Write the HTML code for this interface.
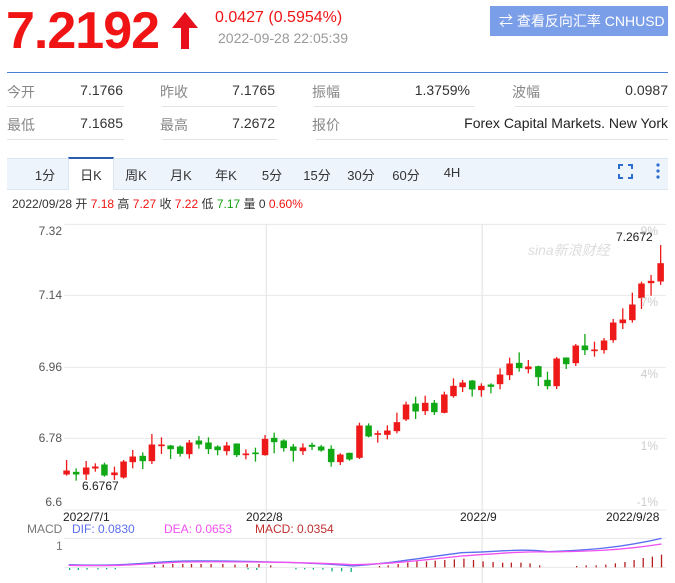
<!DOCTYPE html>
<html><head><meta charset="utf-8"><style>
body{margin:0;width:675px;height:583px;background:#fff;font-family:"Liberation Sans","Noto Sans CJK SC",sans-serif;position:relative;overflow:hidden}
.a{position:absolute;white-space:nowrap}
.g{color:#888}
.t{position:absolute;top:165px;font-size:13px;color:#333;transform:translateX(-50%)}
.yl{position:absolute;left:20px;width:42px;text-align:right;font-size:12px;color:#555}
.yr{position:absolute;left:610px;width:48px;text-align:right;font-size:12px;color:#ccc}
.ln{position:absolute;border-top:1px solid #e4e4e4}
</style></head><body>
<div class="a" style="left:6px;top:1px;font-size:52px;font-weight:bold;color:#f01414;letter-spacing:-1px;line-height:60px">7.2192</div>
<svg class="a" style="left:170px;top:12px" width="30" height="38"><path d="M15 0 L28 16 L19 16 L19 37 L11 37 L11 16 L2 16 Z" fill="#e8101c"/></svg>
<div class="a" style="left:215px;top:9px;font-size:16px;color:#f01414">0.0427 (0.5954%)</div>
<div class="a" style="left:218px;top:30px;font-size:14px;color:#999">2022-09-28 22:05:39</div>
<div class="a" style="left:490px;top:6px;width:178px;height:30px;background:#7b9ee8;color:#fff;font-size:14px;line-height:30px;overflow:hidden"><span style="padding-left:9px">⇄ 查看反向汇率 CNHUSD</span></div>
<div class="a" style="left:7px;top:72px;width:661px;border-top:1px solid #4a7fcf"></div>
<div style="font-size:14px">
<div class="a g" style="left:7px;top:82px">今开</div><div class="a" style="left:60px;top:82px;text-align:right;color:#333;width:63px">7.1766</div>
<div class="a g" style="left:160px;top:82px">昨收</div><div class="a" style="left:200px;top:82px;width:75px;text-align:right;color:#333">7.1765</div>
<div class="a g" style="left:312px;top:82px">振幅</div><div class="a" style="left:380px;top:82px;width:90px;text-align:right;color:#333">1.3759%</div>
<div class="a g" style="left:512px;top:82px">波幅</div><div class="a" style="left:580px;top:82px;width:88px;text-align:right;color:#333">0.0987</div>
<div class="a g" style="left:7px;top:115px">最低</div><div class="a" style="left:60px;top:115px;text-align:right;color:#333;width:63px">7.1685</div>
<div class="a g" style="left:160px;top:115px">最高</div><div class="a" style="left:200px;top:115px;width:75px;text-align:right;color:#333">7.2672</div>
<div class="a g" style="left:312px;top:115px">报价</div><div class="a" style="left:400px;top:115px;width:268px;text-align:right;color:#222">Forex Capital Markets. New York</div>
</div>
<div class="ln" style="left:7px;top:106px;width:117px"></div>
<div class="ln" style="left:162px;top:106px;width:115px"></div>
<div class="ln" style="left:314px;top:106px;width:161px"></div>
<div class="ln" style="left:515px;top:106px;width:153px"></div>
<div class="ln" style="left:7px;top:139px;width:117px"></div>
<div class="ln" style="left:162px;top:139px;width:115px"></div>
<div class="ln" style="left:316px;top:139px;width:352px"></div>
<div class="a" style="left:7px;top:158px;width:661px;height:30px;background:#eef4fc;border-top:1px solid #dce6f2;border-bottom:1px solid #dce6f2"></div>
<div class="a" style="left:68px;top:157px;width:44px;height:31px;background:#fff;border-top:2px solid #2a5db0;border-left:1px solid #dce6f2;border-right:1px solid #dce6f2"></div>
<div class="t" style="left:45px">1分</div><div class="t" style="left:91px">日K</div>
<div class="t" style="left:136px">周K</div><div class="t" style="left:181px">月K</div>
<div class="t" style="left:226px">年K</div><div class="t" style="left:272px">5分</div>
<div class="t" style="left:317px">15分</div><div class="t" style="left:361px">30分</div>
<div class="t" style="left:406px">60分</div><div class="t" style="left:452px">4H</div>
<svg class="a" style="left:618px;top:164px" width="15" height="15"><path d="M1 5V1H5M10 1H14V5M14 10V14H10M5 14H1V10" stroke="#2a6fd0" stroke-width="2" fill="none"/></svg>
<svg class="a" style="left:656px;top:162px" width="4" height="18"><circle cx="2" cy="3" r="1.6" fill="#2a6fd0"/><circle cx="2" cy="9" r="1.6" fill="#2a6fd0"/><circle cx="2" cy="15" r="1.6" fill="#2a6fd0"/></svg>
<div class="a" style="left:12px;top:195px;font-size:12px;color:#333">2022/09/28 开 <span style="color:#f01414">7.18</span> 高 <span style="color:#f01414">7.27</span> 收 <span style="color:#f01414">7.22</span> 低 <span style="color:#10a010">7.17</span> 量 0 <span style="color:#f01414">0.60%</span></div>
<svg class="a" style="left:0;top:220px" width="675" height="363" viewBox="0 0 1551 1089" preserveAspectRatio="none">
<g stroke="#e8e8e8" stroke-width="3">
<line x1="148" y1="13" x2="1530" y2="13"/><line x1="148" y1="226" x2="1530" y2="226"/><line x1="148" y1="442" x2="1530" y2="442"/><line x1="148" y1="655" x2="1530" y2="655"/><line x1="148" y1="870" x2="1530" y2="870"/>
<line x1="612" y1="13" x2="612" y2="1089"/><line x1="1108" y1="13" x2="1108" y2="1089"/>
<line x1="148" y1="955" x2="1530" y2="955"/><line x1="148" y1="1042" x2="1530" y2="1042"/>
</g>
<g stroke-width="3">
<g stroke="#ee1a1a" fill="#ee1a1a">
<line x1="153" y1="720" x2="153" y2="767"/><rect x="147" y="753" width="12" height="9"/>
<line x1="198" y1="723" x2="198" y2="780"/><rect x="192" y="744" width="12" height="18"/>
<line x1="219" y1="730" x2="219" y2="755"/><rect x="213" y="741" width="12" height="3"/>
<line x1="263" y1="740" x2="263" y2="780"/><rect x="257" y="759" width="12" height="5"/>
<line x1="284" y1="720" x2="284" y2="776"/><rect x="278" y="726" width="12" height="45"/>
<line x1="305" y1="690" x2="305" y2="745"/><rect x="299" y="711" width="12" height="14"/>
<line x1="349" y1="642" x2="349" y2="732"/><rect x="343" y="675" width="12" height="47"/>
<line x1="371" y1="652" x2="371" y2="702"/><rect x="365" y="675" width="12" height="2"/>
<line x1="435" y1="660" x2="435" y2="716"/><rect x="429" y="669" width="12" height="32"/>
<line x1="521" y1="666" x2="521" y2="706"/><rect x="515" y="678" width="12" height="14"/>
<line x1="565" y1="688" x2="565" y2="718"/><rect x="559" y="702" width="12" height="2"/>
<line x1="609" y1="645" x2="609" y2="707"/><rect x="603" y="658" width="12" height="46"/>
<line x1="696" y1="670" x2="696" y2="705"/><rect x="690" y="684" width="12" height="8"/>
<line x1="782" y1="700" x2="782" y2="735"/><rect x="776" y="705" width="12" height="20"/>
<line x1="826" y1="608" x2="826" y2="717"/><rect x="820" y="618" width="12" height="94"/>
<line x1="868" y1="632" x2="868" y2="668"/><rect x="862" y="641" width="12" height="2"/>
<line x1="890" y1="616" x2="890" y2="658"/><rect x="884" y="633" width="12" height="10"/>
<line x1="912" y1="578" x2="912" y2="640"/><rect x="906" y="608" width="12" height="24"/>
<line x1="933" y1="545" x2="933" y2="603"/><rect x="927" y="555" width="12" height="42"/>
<line x1="977" y1="527" x2="977" y2="585"/><rect x="971" y="550" width="12" height="22"/>
<line x1="1021" y1="515" x2="1021" y2="580"/><rect x="1015" y="525" width="12" height="52"/>
<line x1="1042" y1="475" x2="1042" y2="533"/><rect x="1036" y="499" width="12" height="28"/>
<line x1="1063" y1="480" x2="1063" y2="516"/><rect x="1057" y="489" width="12" height="11"/>
<line x1="1106" y1="490" x2="1106" y2="530"/><rect x="1100" y="499" width="12" height="10"/>
<line x1="1149" y1="445" x2="1149" y2="508"/><rect x="1143" y="465" width="12" height="26"/>
<line x1="1171" y1="413" x2="1171" y2="480"/><rect x="1165" y="432" width="12" height="32"/>
<line x1="1214" y1="420" x2="1214" y2="460"/><rect x="1208" y="441" width="12" height="5"/>
<line x1="1279" y1="411" x2="1279" y2="507"/><rect x="1273" y="417" width="12" height="80"/>
<line x1="1323" y1="372" x2="1323" y2="438"/><rect x="1317" y="378" width="12" height="50"/>
<line x1="1366" y1="365" x2="1366" y2="410"/><rect x="1360" y="390" width="12" height="2"/>
<line x1="1388" y1="354" x2="1388" y2="401"/><rect x="1382" y="363" width="12" height="26"/>
<line x1="1409" y1="297" x2="1409" y2="368"/><rect x="1403" y="309" width="12" height="50"/>
<line x1="1431" y1="265" x2="1431" y2="327"/><rect x="1425" y="300" width="12" height="8"/>
<line x1="1453" y1="218" x2="1453" y2="308"/><rect x="1447" y="255" width="12" height="44"/>
<line x1="1474" y1="185" x2="1474" y2="267"/><rect x="1468" y="192" width="12" height="41"/>
<line x1="1496" y1="165" x2="1496" y2="227"/><rect x="1490" y="184" width="12" height="4"/>
<line x1="1518" y1="75" x2="1518" y2="195"/><rect x="1512" y="131" width="12" height="52"/>
</g>
<g stroke="#10a814" fill="#10a814">
<line x1="175" y1="745" x2="175" y2="782"/><rect x="169" y="757" width="12" height="5"/>
<line x1="240" y1="728" x2="240" y2="770"/><rect x="234" y="735" width="12" height="30"/>
<line x1="328" y1="697" x2="328" y2="747"/><rect x="322" y="709" width="12" height="13"/>
<line x1="392" y1="675" x2="392" y2="717"/><rect x="386" y="678" width="12" height="8"/>
<line x1="414" y1="676" x2="414" y2="710"/><rect x="408" y="681" width="12" height="19"/>
<line x1="457" y1="648" x2="457" y2="686"/><rect x="451" y="663" width="12" height="9"/>
<line x1="479" y1="652" x2="479" y2="702"/><rect x="473" y="669" width="12" height="17"/>
<line x1="500" y1="676" x2="500" y2="706"/><rect x="494" y="681" width="12" height="8"/>
<line x1="544" y1="670" x2="544" y2="711"/><rect x="538" y="672" width="12" height="32"/>
<line x1="587" y1="683" x2="587" y2="725"/><rect x="581" y="699" width="12" height="2"/>
<line x1="630" y1="638" x2="630" y2="700"/><rect x="624" y="655" width="12" height="10"/>
<line x1="652" y1="658" x2="652" y2="695"/><rect x="646" y="663" width="12" height="20"/>
<line x1="674" y1="672" x2="674" y2="725"/><rect x="668" y="681" width="12" height="10"/>
<line x1="717" y1="668" x2="717" y2="690"/><rect x="711" y="676" width="12" height="3"/>
<line x1="738" y1="675" x2="738" y2="695"/><rect x="732" y="681" width="12" height="9"/>
<line x1="761" y1="676" x2="761" y2="740"/><rect x="755" y="688" width="12" height="37"/>
<line x1="803" y1="698" x2="803" y2="722"/><rect x="797" y="700" width="12" height="17"/>
<line x1="847" y1="610" x2="847" y2="652"/><rect x="841" y="618" width="12" height="30"/>
<line x1="955" y1="530" x2="955" y2="597"/><rect x="949" y="552" width="12" height="21"/>
<line x1="998" y1="540" x2="998" y2="585"/><rect x="992" y="550" width="12" height="25"/>
<line x1="1085" y1="480" x2="1085" y2="530"/><rect x="1079" y="483" width="12" height="24"/>
<line x1="1128" y1="490" x2="1128" y2="520"/><rect x="1122" y="495" width="12" height="4"/>
<line x1="1193" y1="397" x2="1193" y2="455"/><rect x="1187" y="430" width="12" height="13"/>
<line x1="1237" y1="437" x2="1237" y2="498"/><rect x="1231" y="440" width="12" height="30"/>
<line x1="1258" y1="455" x2="1258" y2="508"/><rect x="1252" y="481" width="12" height="16"/>
<line x1="1301" y1="412" x2="1301" y2="447"/><rect x="1295" y="414" width="12" height="17"/>
<line x1="1344" y1="342" x2="1344" y2="405"/><rect x="1338" y="378" width="12" height="11"/>
</g>
<g stroke="#b82020"><path d="M355 1042v-6M375 1042v-8M397 1042v-10M420 1042v-10M440 1042v-10M462 1042v-10M485 1042v-10M512 1042v-10M540 1042v-8M568 1042v-10M595 1042v-10M622 1042v-6M872 1042v-4M892 1042v-6M915 1042v-10M937 1042v-14M958 1042v-18M980 1042v-18M1000 1042v-20M1022 1042v-22M1044 1042v-24M1066 1042v-26M1088 1042v-22M1110 1042v-18M1133 1042v-16M1155 1042v-14M1175 1042v-14M1197 1042v-14M1218 1042v-12M1240 1042v-6M1325 1042v-4M1347 1042v-6M1370 1042v-6M1392 1042v-8M1414 1042v-12M1436 1042v-16M1457 1042v-22M1478 1042v-28M1499 1042v-32M1520 1042v-38"/></g>
<g stroke="#10b080"><path d="M160 1044v6M180 1044v6M200 1044v5M225 1044v4M245 1044v4M265 1044v4M570 1044v4M590 1044v6M680 1044v4M700 1044v4M720 1044v5M742 1044v5M763 1044v10M785 1044v10M807 1044v12"/></g>
<path d="M158 1034 C300 1040 340 1025 420 1023 C500 1022 700 1025 810 1038 C900 1030 960 1015 1060 998 C1150 995 1200 985 1260 995 C1350 990 1420 985 1520 955" stroke="#5a6ef0" stroke-width="4" fill="none"/>
<path d="M158 1036 C300 1040 340 1030 420 1026 C500 1024 700 1026 810 1034 C900 1032 960 1022 1060 1008 C1150 1000 1200 994 1260 996 C1350 994 1420 992 1520 972" stroke="#f050f0" stroke-width="4" fill="none"/>
</g>
</svg>
<div class="yl" style="top:224px">7.32</div><div class="yl" style="top:288px">7.14</div><div class="yl" style="top:360px">6.96</div><div class="yl" style="top:431px">6.78</div><div class="yl" style="top:495px">6.6</div>
<div class="yr" style="top:224px">9%</div><div class="yr" style="top:295px">7%</div><div class="yr" style="top:367px">4%</div><div class="yr" style="top:439px">1%</div><div class="yr" style="top:495px">-1%</div>
<div class="a" style="left:528px;top:240px;font-size:14px;color:#ddd;font-style:italic">sina新浪财经</div>
<div class="a" style="left:616px;top:230px;font-size:12px;color:#222">7.2672</div>
<div class="a" style="left:82px;top:479px;font-size:12px;color:#222">6.6767</div>
<div class="a" style="left:63px;top:510px;font-size:12px;color:#222">2022/7/1</div>
<div class="a" style="left:246px;top:510px;font-size:12px;color:#222">2022/8</div>
<div class="a" style="left:460px;top:510px;font-size:12px;color:#222">2022/9</div>
<div class="a" style="left:606px;top:510px;font-size:12px;color:#222">2022/9/28</div>
<div class="a" style="left:27px;top:522px;font-size:12px;color:#777">MACD</div>
<div class="a" style="left:72px;top:522px;font-size:12px;color:#5a6ef0">DIF: 0.0830</div>
<div class="a" style="left:164px;top:522px;font-size:12px;color:#f050f0">DEA: 0.0653</div>
<div class="a" style="left:255px;top:522px;font-size:12px;color:#c03030">MACD: 0.0354</div>
<div class="a" style="left:56px;top:539px;font-size:12px;color:#777">1</div>
</body></html>
